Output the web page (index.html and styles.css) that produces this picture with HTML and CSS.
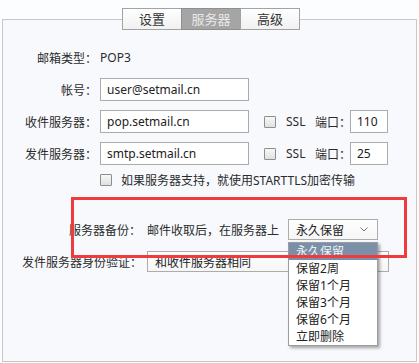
FILE: index.html
```html
<!DOCTYPE html>
<html lang="zh-CN">
<head>
<meta charset="utf-8">
<title>服务器设置</title>
<link rel="stylesheet" href="styles.css">
</head>
<body>
<div class="window">
  <div class="tabs">
    <div class="tab">设置</div>
    <div class="tab active">服务器</div>
    <div class="tab">高级</div>
  </div>
  <div class="panel">
    <div class="row">
      <span class="label">邮箱类型<span class="p">：</span></span><span class="value">POP3</span>
    </div>
    <div class="row">
      <span class="label">帐号<span class="p">：</span></span><div class="input wide">user@setmail.cn</div>
    </div>
    <div class="row">
      <span class="label">收件服务器<span class="p">：</span></span><div class="input wide">pop.setmail.cn</div>
      <span class="check"></span><span class="ssl">SSL</span><span class="port-label">端口<span class="p">：</span></span><div class="input port">110</div>
    </div>
    <div class="row">
      <span class="label">发件服务器<span class="p">：</span></span><div class="input wide">smtp.setmail.cn</div>
      <span class="check"></span><span class="ssl">SSL</span><span class="port-label">端口<span class="p">：</span></span><div class="input port">25</div>
    </div>
    <div class="row tls">
      <span class="check first"></span><span>如果服务器支持<span class="p">，</span>就使用STARTTLS加密传输</span>
    </div>
    <div class="row backup">
      <span class="label l2">服务器备份<span class="p">：</span></span><span class="desc">邮件收取后<span class="p">，</span>在服务器上</span>
      <div class="select-wrap">
        <div class="select s1"><span>永久保留</span><svg class="arrow" width="8" height="5" viewBox="0 0 8 5"><polyline points="0.5,0.5 4,4 7.5,0.5" fill="none" stroke="#777" stroke-width="1"/></svg></div>
        <ul class="menu">
          <li class="on">永久保留</li>
          <li>保留2周</li>
          <li>保留1个月</li>
          <li>保留3个月</li>
          <li>保留6个月</li>
          <li>立即删除</li>
        </ul>
      </div>
    </div>
    <div class="row auth">
      <span class="label l3">发件服务器身份验证<span class="p">：</span></span>
      <div class="select s2"><span>和收件服务器相同</span><svg class="arrow" width="8" height="5" viewBox="0 0 8 5"><polyline points="0.5,0.5 4,4 7.5,0.5" fill="none" stroke="#777" stroke-width="1"/></svg></div>
    </div>
    <div class="highlight"></div>
  </div>
</div>
</body>
</html>
```
FILE: styles.css
```css
body {
  margin: 0;
  background: #fcfdfe;
  font-family: "Noto Sans", "Noto Sans CJK SC", sans-serif;
  font-size: 12px;
  color: #2b2b2b;
}
.p {
  font-family: "Noto Sans CJK TC", "Noto Sans CJK SC", sans-serif;
}
.window {
  padding-top: 8px;
}
.tabs {
  display: flex;
  margin-left: 122px;
  position: relative;
  z-index: 1;
}
.tab {
  box-sizing: border-box;
  width: 60px;
  height: 22px;
  border: 1px solid #a2a2a2;
  background: linear-gradient(#fefefe, #f1f1f1);
  text-align: center;
  line-height: 20px;
  font-size: 13px;
  color: #333;
}
.tab + .tab {
  margin-left: -1px;
}
.tab.active {
  background: #a5a5a5;
  border-color: #8e8e8e;
  color: #e9e9e9;
}
.panel {
  position: relative;
  box-sizing: border-box;
  margin: -11px 0 0 2px;
  width: 415px;
  height: 343px;
  border: 1px solid #c7c7c7;
  background: #f7f9fd;
  padding-top: 26px;
}
.row {
  display: flex;
  align-items: center;
  height: 23px;
  margin-bottom: 9px;
  white-space: nowrap;
}
.label {
  flex: none;
  width: 94px;
  margin-right: 3px;
  text-align: right;
}
.input {
  box-sizing: border-box;
  height: 23px;
  border: 1px solid #ababab;
  background: #fff;
  padding-left: 6px;
  line-height: 21px;
  color: #222;
}
.wide {
  width: 149px;
}
.check {
  flex: none;
  box-sizing: border-box;
  width: 12px;
  height: 12px;
  border: 1px solid #8e8e8e;
  border-radius: 1px;
  background: linear-gradient(#f8f8f8, #e0e0e0);
  margin: 0 10px 0 15px;
}
.ssl {
  width: 19px;
  margin-right: 10px;
}
.port-label {
  width: 35px;
}
.port {
  width: 38px;
}
.tls {
  height: 12px;
  padding-left: 97px;
  margin-bottom: 0;
}
.check.first {
  margin: 0 9px 0 0;
}
.backup {
  height: 21px;
  margin-top: 33px;
  margin-bottom: 11px;
}
.l2 {
  width: 138px;
  margin-right: 6px;
}
.desc {
  margin-right: 9px;
}
.select-wrap {
  position: relative;
}
.select {
  box-sizing: border-box;
  display: flex;
  align-items: center;
  justify-content: space-between;
  height: 21px;
  border: 1px solid #acacac;
  background: linear-gradient(#fefefe, #f6f6f6);
  padding: 0 9px 0 7px;
  color: #222;
}
.s1 {
  width: 90px;
}
.auth {
  height: 21px;
}
.l3 {
  width: 139px;
  margin-right: 5px;
}
.s2 {
  width: 242px;
}
.menu {
  position: absolute;
  z-index: 2;
  top: 23px;
  left: 0;
  box-sizing: border-box;
  width: 90px;
  margin: 0;
  padding: 0;
  list-style: none;
  border: 1px solid #9c9c9c;
  background: #fff;
  box-shadow: 2px 2px 3px rgba(0, 0, 0, 0.35);
}
.menu li {
  height: 17px;
  line-height: 17px;
  padding-left: 7px;
  color: #222;
}
.menu li.on {
  background: #7b8fa8;
  color: #eef2f7;
}
.highlight {
  position: absolute;
  z-index: 3;
  left: 68px;
  top: 177px;
  box-sizing: border-box;
  width: 336px;
  height: 61px;
  border: 3px solid #ef3a3e;
  pointer-events: none;
}
```
